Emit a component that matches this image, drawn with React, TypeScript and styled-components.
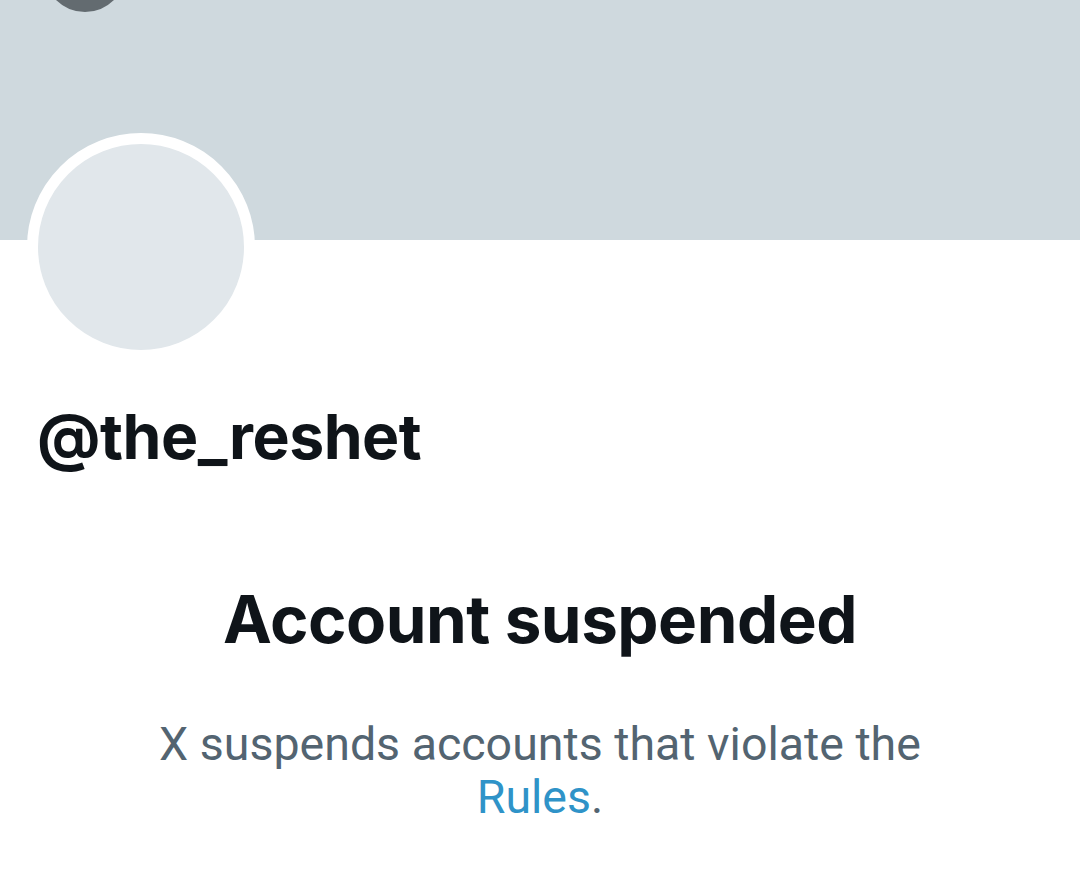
import React from 'react';
import styled, { createGlobalStyle } from 'styled-components';

const GlobalStyle = createGlobalStyle`
  html, body {
    margin: 0;
    padding: 0;
    background: #ffffff;
  }
  body {
    font-family: Roboto, 'Liberation Sans', sans-serif;
    -webkit-font-smoothing: antialiased;
  }
`;

const Page = styled.div`
  width: 1080px;
  height: 870px;
  overflow: hidden;
  display: flex;
  flex-direction: column;
  background: #ffffff;
`;

const Banner = styled.div`
  position: relative;
  height: 240px;
  flex-shrink: 0;
  background: #cfd9de;
`;

const BackButton = styled.div`
  position: absolute;
  left: 44px;
  top: -70px;
  width: 82px;
  height: 82px;
  border-radius: 50%;
  background: #636b70;
`;

const Profile = styled.div`
  display: flex;
  flex-direction: column;
  padding: 0 37px;
`;

const Avatar = styled.div`
  position: relative;
  z-index: 1;
  width: 206px;
  height: 206px;
  margin-top: -107px;
  margin-left: -10px;
  border-radius: 50%;
  border: 11px solid #ffffff;
  background: #e1e7eb;
`;

const Handle = styled.h1`
  margin: 35px 0 0 0;
  font-family: Inter, Roboto, 'Liberation Sans', sans-serif;
  font-weight: 700;
  font-size: 62.5px;
  line-height: 80px;
  letter-spacing: -0.5px;
  color: #0f1419;
`;

const Notice = styled.div`
  display: flex;
  flex-direction: column;
  align-items: center;
  text-align: center;
  padding: 0 120px;
  margin-top: 104px;
`;

const NoticeTitle = styled.h2`
  margin: 0;
  font-family: Inter, Roboto, 'Liberation Sans', sans-serif;
  font-weight: 700;
  font-size: 65.5px;
  line-height: 80px;
  letter-spacing: -0.5px;
  color: #0f1419;
`;

const NoticeText = styled.p`
  margin: 58px 0 0 0;
  max-width: 800px;
  font-family: Roboto, 'Liberation Sans', sans-serif;
  font-weight: 400;
  font-size: 46.5px;
  line-height: 53px;
  color: #536471;
`;

const RulesLink = styled.a`
  color: #2f93c8;
  text-decoration: none;
`;

const App: React.FC = () => {
  return (
    <Page>
      <GlobalStyle />
      <Banner>
        <BackButton />
      </Banner>
      <Profile>
        <Avatar />
        <Handle>@the_reshet</Handle>
      </Profile>
      <Notice>
        <NoticeTitle>Account suspended</NoticeTitle>
        <NoticeText>
          X suspends accounts that violate the <RulesLink href="#">Rules</RulesLink>.
        </NoticeText>
      </Notice>
    </Page>
  );
};

export default App;
